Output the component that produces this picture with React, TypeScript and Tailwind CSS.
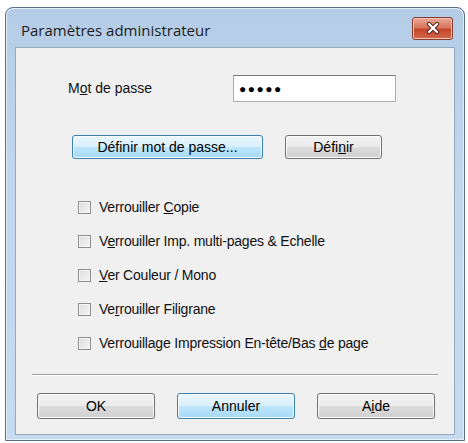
import React from 'react';

const font = { fontFamily: '"Liberation Sans", Arial, sans-serif' };

const Btn: React.FC<{ w: string; blue?: boolean; children: React.ReactNode }> = ({ w, blue, children }) => (
  <div
    className={`${w} h-full rounded-[3px] border flex items-center justify-center text-[14px] text-black ${
      blue
        ? 'border-[#3c7fb1] bg-[linear-gradient(to_bottom,#eaf6fd_0%,#d9f0fc_50%,#bee6fd_50%,#a7d9f5_100%)] shadow-[inset_0_0_0_1px_#fbfdfe]'
        : 'border-[#707070] bg-[linear-gradient(to_bottom,#f2f2f2_0%,#ebebeb_50%,#dddddd_50%,#cfcfcf_100%)] shadow-[inset_0_0_0_1px_#fcfcfc]'
    }`}
  >
    {children}
  </div>
);

const Check: React.FC<{ children: React.ReactNode }> = ({ children }) => (
  <div className="flex items-center gap-[8px] h-[20px]">
    <div className="w-[13px] h-[13px] border border-[#8e8f8f] bg-[linear-gradient(135deg,#dcdcdc,#f6f6f6)] shadow-[inset_0_0_0_1px_#f4f4f4]" />
    <span className="text-[14px] text-[#111] tracking-[-0.2px]">{children}</span>
  </div>
);

export default function App() {
  return (
    <div className="w-[468px] h-[443px] bg-white pt-[7px] pl-[5px]" style={font}>
      <div className="w-[460px] h-[434px] rounded-t-[8px] border border-[#5a6f86] bg-[linear-gradient(to_bottom,#b4cce6,#c2d7ee_40%,#c6daf0)] flex flex-col shadow-[inset_0_0_0_1px_#e4eef8]">
        {/* title bar */}
        <div className="h-[39px] flex items-center pl-[15px] pr-[11px] shrink-0">
          <span className="text-[15px] text-[#1c1c1c] mt-[5px]" style={{ fontFamily: '"Open Sans", "Noto Sans", sans-serif' }}>
            Paramètres administrateur
          </span>
          <div className="ml-auto mt-[1px] w-[41px] h-[23px] rounded-[3px] border border-[#8a3a2a] bg-[linear-gradient(to_bottom,#e9a99a_0%,#d8755c_45%,#c5442a_55%,#d26a4f_100%)] flex items-center justify-center shadow-[inset_0_0_0_1px_#f1c3b6]">
            <svg width="14" height="12" viewBox="0 0 14 12">
              <path d="M3 2 L11 10 M11 2 L3 10" stroke="#5a1e12" strokeWidth="4.2" strokeLinecap="round" />
              <path d="M3 2 L11 10 M11 2 L3 10" stroke="#ffffff" strokeWidth="2.4" strokeLinecap="round" />
            </svg>
          </div>
        </div>
        {/* client area */}
        <div className="mx-[9px] mb-[5px] flex-1 bg-[#f0f0f0] border border-[#93a9c0] flex flex-col">
          <div className="h-[27px] mt-[27px] flex items-center">
            <span className="ml-[52px] text-[14px] text-[#111]">
              M<u>o</u>t de passe
            </span>
            <div className="ml-auto mr-[58px] w-[163px] h-full bg-white border border-[#abadb3] border-t-[#7a7a7a] flex items-center pl-[5px]">
              <span className="text-[12px] tracking-[1.5px] text-black">●●●●●</span>
            </div>
          </div>
          <div className="h-[24px] mt-[33px] flex gap-[22px] pl-[56px]">
            <Btn w="w-[191px]" blue>Définir mot de passe...</Btn>
            <Btn w="w-[97px]">Défi<u>n</u>ir</Btn>
          </div>
          <div className="flex flex-col gap-[14px] pl-[62px] mt-[38px]">
            <Check>Verrouiller <u>C</u>opie</Check>
            <Check>V<u>e</u>rrouiller Imp. multi-pages &amp; Echelle</Check>
            <Check><u>V</u>er Couleur / Mono</Check>
            <Check>Ve<u>r</u>rouiller Filigrane</Check>
            <Check>Verrouillage Impression En-tête/Bas <u>d</u>e page</Check>
          </div>
          <div className="mx-[16px] mt-[21px] h-[2px] border-t border-[#a0a0a0] border-b border-b-white" />
          <div className="h-[26px] mt-[17px] flex gap-[22px] pl-[21px]">
            <Btn w="w-[118px]">OK</Btn>
            <Btn w="w-[118px]" blue>Annuler</Btn>
            <Btn w="w-[118px]">A<u>i</u>de</Btn>
          </div>
        </div>
      </div>
    </div>
  );
}
